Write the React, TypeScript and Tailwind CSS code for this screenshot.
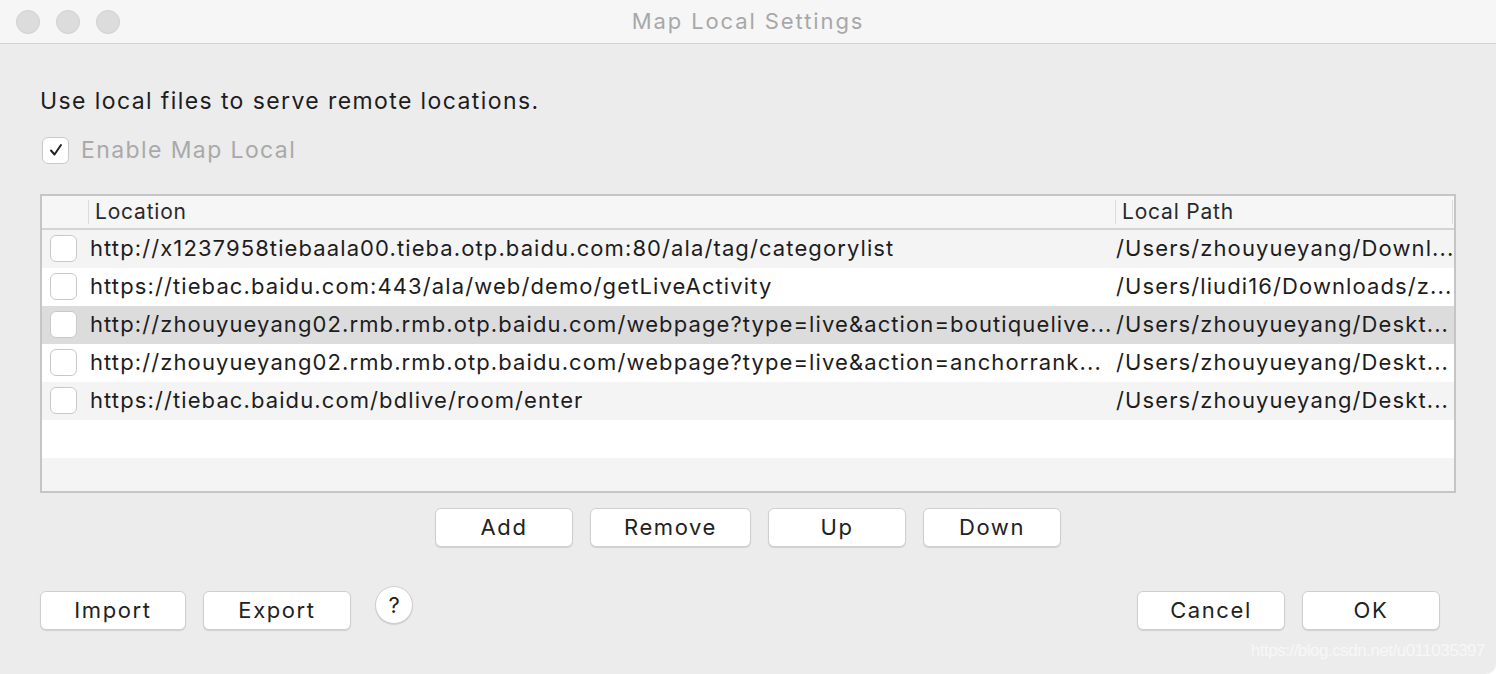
import React from "react";

const rows = [
  { loc: "http://x1237958tiebaala00.tieba.otp.baidu.com:80/ala/tag/categorylist", path: "/Users/zhouyueyang/Downl...", bg: "bg-[#f4f4f5]" },
  { loc: "https://tiebac.baidu.com:443/ala/web/demo/getLiveActivity", path: "/Users/liudi16/Downloads/z...", bg: "bg-white" },
  { loc: "http://zhouyueyang02.rmb.rmb.otp.baidu.com/webpage?type=live&action=boutiquelive...", path: "/Users/zhouyueyang/Deskt...", bg: "bg-[#dcdcdd]" },
  { loc: "http://zhouyueyang02.rmb.rmb.otp.baidu.com/webpage?type=live&action=anchorrank...", path: "/Users/zhouyueyang/Deskt...", bg: "bg-white" },
  { loc: "https://tiebac.baidu.com/bdlive/room/enter", path: "/Users/zhouyueyang/Deskt...", bg: "bg-[#f4f4f5]" },
];

function Btn({ label, w }: { label: string; w: string }) {
  return (
    <div
      className={`${w} h-[39px] flex items-center justify-center rounded-[6px] bg-white border border-[#cfcfcf] shadow-[0_1px_1px_rgba(0,0,0,0.12)] text-[22px] tracking-[1.6px] text-[#222]`}
    >
      {label}
    </div>
  );
}

function Check({ checked }: { checked?: boolean }) {
  return (
    <div className="w-[27px] h-[27px] rounded-[6px] bg-white border border-[#c9c9c9] flex items-center justify-center">
      {checked && (
        <svg width="16" height="16" viewBox="0 0 16 16">
          <path d="M3 8.5 L6.5 12.5 L13 3" fill="none" stroke="#222" strokeWidth="2" strokeLinecap="round" strokeLinejoin="round" />
        </svg>
      )}
    </div>
  );
}

export default function App() {
  return (
    <div
      className="w-[1496px] h-[674px] bg-[#ececed] flex flex-col overflow-hidden rounded-br-[10px]"
      style={{ fontFamily: "Inter, 'Noto Sans', sans-serif" }}
    >
      {/* title bar */}
      <div className="h-[44px] bg-[#f6f6f7] border-b border-[#d2d2d3] flex items-center relative shrink-0">
        <div className="flex gap-[16px] pl-[16px]">
          <div className="w-[24px] h-[24px] rounded-full bg-[#dcdcdc] border border-[#d0d0d0]" />
          <div className="w-[24px] h-[24px] rounded-full bg-[#dcdcdc] border border-[#d0d0d0]" />
          <div className="w-[24px] h-[24px] rounded-full bg-[#dcdcdc] border border-[#d0d0d0]" />
        </div>
        <div className="absolute inset-0 flex items-center justify-center text-[22px] tracking-[1.9px] text-[#a8a8a8]">
          Map Local Settings
        </div>
      </div>

      <div className="flex flex-col px-[40px] pt-[42px] flex-1">
        <div className="text-[23px] tracking-[1.4px] text-[#1d1d1d] leading-[30px]">Use local files to serve remote locations.</div>
        <div className="flex items-center gap-[12px] mt-[17px] pl-[2px]">
          <Check checked />
          <span className="text-[23px] tracking-[1.4px] text-[#a9a9a9]">Enable Map Local</span>
        </div>

        {/* table */}
        <div className="mt-[26px] w-[1416px] h-[299px] border-2 border-[#c5c5c6] bg-white flex flex-col overflow-hidden">
          <div className="h-[34px] bg-[#f6f6f7] border-b-2 border-[#d4d4d5] flex items-center text-[21px] tracking-[0.8px] text-[#2a2a2a] shrink-0">
            <div className="w-[47px] h-full flex items-center justify-end">
              <div className="w-px h-[24px] bg-[#dcdcdc]" />
            </div>
            <div className="w-[1026px] pl-[6px]">Location</div>
            <div className="w-px h-[24px] bg-[#dcdcdc]" />
            <div className="flex-1 pl-[6px]">Local Path</div>
            <div className="w-px h-[24px] bg-[#dcdcdc] mr-[1px]" />
          </div>
          {rows.map((r, i) => (
            <div key={i} className={`h-[38px] ${r.bg} flex items-center text-[22px] tracking-[1.1px] text-[#1d1d1d] shrink-0`}>
              <div className="w-[48px] flex justify-start pl-[8px]">
                <Check />
              </div>
              <div className="w-[1026px] whitespace-nowrap overflow-hidden">{r.loc}</div>
              <div className="flex-1 whitespace-nowrap overflow-hidden">{r.path}</div>
            </div>
          ))}
          <div className="h-[38px] bg-white shrink-0" />
          <div className="flex-1 bg-[#f4f4f5]" />
        </div>

        <div className="flex justify-center gap-[17px] mt-[15px]">
          <Btn label="Add" w="w-[138px]" />
          <Btn label="Remove" w="w-[161px]" />
          <Btn label="Up" w="w-[138px]" />
          <Btn label="Down" w="w-[138px]" />
        </div>

        <div className="flex items-center mt-[44px]">
          <div className="flex items-center gap-[17px]">
            <Btn label="Import" w="w-[146px]" />
            <Btn label="Export" w="w-[148px]" />
          </div>
          <div className="ml-[24px] -mt-[10px] w-[38px] h-[38px] rounded-full bg-white border border-[#cfcfcf] shadow-[0_1px_1px_rgba(0,0,0,0.12)] flex items-center justify-center text-[22px] text-[#222]">
            ?
          </div>
          <div className="flex-1" />
          <div className="flex items-center gap-[17px] mr-[16px]">
            <Btn label="Cancel" w="w-[148px]" />
            <Btn label="OK" w="w-[138px]" />
          </div>
        </div>
        <div className="flex justify-end mt-[8px] -mr-[29px] text-[17px] text-[#f7f7f7] tracking-[-0.5px]" style={{ fontFamily: "Arial, 'Liberation Sans', sans-serif" }}>
          https://blog.csdn.net/u011035397
        </div>
      </div>
    </div>
  );
}
